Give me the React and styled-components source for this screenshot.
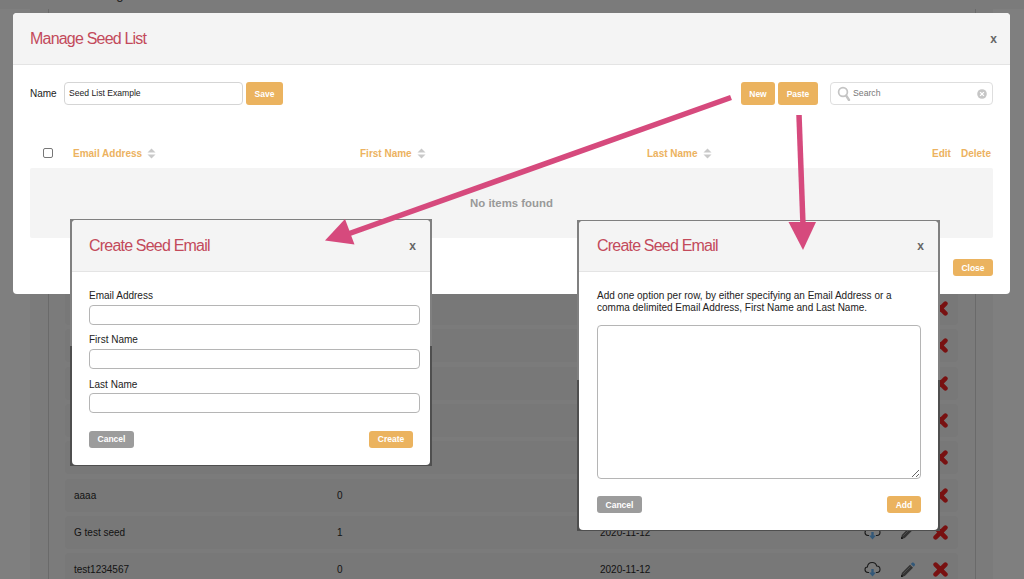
import React from "react";
import styled, { createGlobalStyle } from "styled-components";

const GlobalStyle = createGlobalStyle`
  html, body {
    margin: 0;
    padding: 0;
    height: 100%;
    overflow: hidden;
    background: #fff;
  }
  body, input, textarea, button {
    font-family: "Liberation Sans", Arial, sans-serif;
  }
`;

const rows = [
  { name: "" }, { name: "" }, { name: "" }, { name: "" }, { name: "" },
  { name: "aaaa", count: 0, date: "" },
  { name: "G test seed", count: 1, date: "2020-11-12" },
  { name: "test1234567", count: 0, date: "2020-11-12" },
];

const Page = styled.div`
  position: relative;
  width: 1024px;
  height: 579px;
  overflow: hidden;
  background: #fff;
`;

const TopBar = styled.div`
  height: 9px;
  padding-left: 52px;
  background: #f6f6f6;
  overflow: hidden;
`;

const PageTitle = styled.div`
  margin-top: -13px;
  font-size: 13px;
  line-height: 15px;
  color: #333;
`;

const Panel = styled.div`
  width: 963px;
  margin-left: 30px;
  height: 570px;
  padding: 0 17px 0 18px;
  box-sizing: border-box;
  background: #f6f6f6;
`;

const PanelInner = styled.div`
  height: 100%;
  padding: 283px 17px 0 16px;
  box-sizing: border-box;
  border-left: 1px solid #d4d4d4;
  border-right: 1px solid #d4d4d4;
`;

const ListRow = styled.div`
  display: grid;
  grid-template-columns: 263px 263px 1fr auto;
  align-items: center;
  height: 33px;
  margin-bottom: 4.33px;
  padding: 0 10px 0 9px;
  border-radius: 4px;
  background: #f0f0f0;
  font-size: 10px;
  color: #2a2a2a;
`;

const RowActions = styled.div`
  display: flex;
  align-items: center;
  gap: 18.5px;
`;

const Scrim = styled.div`
  position: absolute;
  inset: 0;
  background: rgba(0, 0, 0, 0.5);
`;

const MainModal = styled.div`
  position: absolute;
  left: 13px;
  top: 13px;
  width: 997px;
  height: 281px;
  border-radius: 4px;
  background: #fff;
  overflow: hidden;
`;

const ModalHead = styled.div`
  display: flex;
  align-items: center;
  justify-content: space-between;
  box-sizing: border-box;
  height: ${(p) => p.$height}px;
  padding: 0 ${(p) => p.$padRight}px 0 ${(p) => p.$padLeft}px;
  background: #f4f4f4;
  border-bottom: 1px solid #e4e4e4;
`;

const ModalTitle = styled.h2`
  margin: 0;
  font-size: 16px;
  font-weight: 400;
  letter-spacing: -0.8px;
  color: #c34a5b;
`;

const CloseX = styled.span`
  font-size: 12px;
  font-weight: 700;
  color: #666;
`;

const MainBody = styled.div`
  padding: 17px 17px 0;
`;

const Toolbar = styled.div`
  display: flex;
  align-items: center;
  height: 23px;
`;

const NameLabel = styled.label`
  width: 34px;
  font-size: 10px;
  color: #222;
`;

const Field = styled.input`
  box-sizing: border-box;
  width: ${(p) => p.$width};
  height: ${(p) => p.$height}px;
  padding: 0 4px 1px;
  border: 1px solid #d5d5d5;
  border-radius: 4px;
  background: #fff;
  font-size: 8.6px;
  color: #222;
  outline: none;
`;

const Button = styled.button`
  display: inline-flex;
  align-items: center;
  justify-content: center;
  box-sizing: border-box;
  width: ${(p) => p.$width}px;
  height: ${(p) => p.$height}px;
  margin-left: ${(p) => p.$gap || 0}px;
  padding: 0;
  border: none;
  border-radius: 3px;
  background: ${(p) => (p.$muted ? "#9c9c9c" : "#ebb35f")};
  color: #fff;
  font-size: 8.5px;
  font-weight: 700;
`;

const Spacer = styled.div`
  flex: 1;
`;

const SearchBox = styled.div`
  display: flex;
  align-items: center;
  box-sizing: border-box;
  width: 163px;
  height: 23px;
  margin-left: 12px;
  padding: 0 5px 0 6px;
  border: 1px solid #dedede;
  border-radius: 4px;
  font-size: 8.7px;
  color: #777;
`;

const SearchText = styled.span`
  flex: 1;
  margin-left: 2px;
  padding-bottom: 1px;
`;

const TableHead = styled.div`
  display: grid;
  grid-template-columns: 43px 287px 287px 285px 29px 1fr;
  align-items: center;
  height: 16px;
  margin-top: 40px;
  font-size: 10px;
  font-weight: 700;
  color: #ecb260;
`;

const CheckBox = styled.input`
  appearance: none;
  box-sizing: border-box;
  width: 10px;
  height: 10px;
  margin: 0 0 0 13px;
  border: 1px solid #777;
  border-radius: 2px;
  background: #fff;
`;

const SortLabel = styled.span`
  display: inline-flex;
  align-items: center;
  gap: 5px;
`;

const EmptyBand = styled.div`
  display: flex;
  align-items: center;
  justify-content: center;
  box-sizing: border-box;
  height: 70px;
  margin-top: 7px;
  padding-bottom: 1px;
  border-radius: 2px;
  background: #f4f4f4;
  font-size: 11.4px;
  font-weight: 700;
  color: #999;
`;

const MainFooter = styled.div`
  display: flex;
  justify-content: flex-end;
  margin-top: 21px;
`;

/* the pasted dialogs keep a sliver of what was behind them: mid grey up top, darker lower down */
const DialogFrame = styled.div`
  position: absolute;
  left: ${(p) => p.$left}px;
  top: ${(p) => p.$top}px;
  width: ${(p) => p.$width}px;
  padding: 1.5px 1.5px 1px 2px;
  background: linear-gradient(
    #808080 0,
    #808080 ${(p) => p.$splitAt}px,
    #4f4f4f ${(p) => p.$splitAt}px
  );
`;

const Dialog = styled.div`
  border-radius: 4px;
  background: #fff;
  overflow: hidden;
`;

const DialogBody = styled.div`
  display: flex;
  flex-direction: column;
  padding: 17px ${(p) => p.$pad}px 17.3px;
  font-size: 10px;
  color: #222;
`;

const FieldLabel = styled.label`
  margin-bottom: 2.5px;
  line-height: 13px;
`;

const DialogField = styled(Field)`
  flex: none;
  margin-bottom: 8.9px;
  border: 1px solid #b5b5b5;
`;

const Note = styled.p`
  margin: 1px 0 11px;
  line-height: 12px;
`;

const BigArea = styled.textarea`
  box-sizing: border-box;
  width: 324px;
  height: 154px;
  margin: 0 0 17px;
  border: 1px solid #b5b5b5;
  border-radius: 4px;
  outline: none;
`;

const DialogActions = styled.div`
  display: flex;
  justify-content: space-between;
  margin-top: ${(p) => p.$top || 0}px;
  margin-right: ${(p) => p.$outdent || 0}px;
`;

const ArrowLayer = styled.svg`
  position: absolute;
  inset: 0;
  pointer-events: none;
`;

const SortIcon = () => (
  <svg width="9" height="11" viewBox="0 0 9 11">
    <path d="M4.5 0.5 8.5 4.5H0.5Z M4.5 10.5 8.5 6.5H0.5Z" fill="#c9c9c9" />
  </svg>
);

const SearchIcon = () => (
  <svg width="14" height="15" viewBox="0 0 14 15" fill="none">
    <circle cx="6" cy="6" r="4.4" stroke="#c4c4c4" strokeWidth="1.7" />
    <path d="M9.2 9.6 12 14" stroke="#c4c4c4" strokeWidth="2.4" strokeLinecap="round" />
  </svg>
);

const ClearIcon = () => (
  <svg width="10" height="10" viewBox="0 0 10 10">
    <circle cx="5" cy="5" r="4.8" fill="#c6c6c6" />
    <path d="M3.1 3.1 6.9 6.9M6.9 3.1 3.1 6.9" stroke="#fff" strokeWidth="1.3" />
  </svg>
);

const CloudIcon = () => (
  <svg width="17" height="17" viewBox="0 0 17 17" fill="none">
    <path
      d="M5 11.5H4C2 11.5 1 10 1 8.6 1 7 2.2 6 3.4 6 3.7 3.4 5.8 1.5 8.2 1.5c2.2 0 4 1.5 4.5 3.5C14.6 5 16 6.5 16 8.3 16 10 14.8 11.5 13 11.5H12"
      stroke="#333"
      strokeWidth="1.1"
    />
    <path d="M7.3 8H9.7V11.5H12L8.5 15.5 5 11.5H7.3Z" fill="#66b0f0" />
  </svg>
);

const PencilIcon = () => (
  <svg width="15" height="16" viewBox="0 0 15 16">
    <path d="M1 15 1.8 11 10 2.8 13 5.8 4.8 14Z" fill="#666" />
    <path d="M10.8 2 12 .8C12.5 .3 13.2 .3 13.7 .8L14.7 1.8C15.2 2.3 15.2 3 14.7 3.5L13.6 4.8Z" fill="#66b0f0" />
    <path d="M1 15 1.5 12.7 3.3 14.5Z" fill="#111" />
    <path d="M3.2 11.8 10.5 4.5" stroke="#aaa" strokeWidth="0.8" />
  </svg>
);

const RemoveIcon = () => (
  <svg width="15" height="15" viewBox="0 0 15 15">
    <path d="M2.6 2.6 12.4 12.4M12.4 2.6 2.6 12.4" stroke="#f02222" strokeWidth="4.6" strokeLinecap="round" />
  </svg>
);

const Arrows = () => (
  <ArrowLayer width="1024" height="579" viewBox="0 0 1024 579">
    <path d="M731 97.5 348 234" stroke="#d64a7d" strokeWidth="5.5" />
    <path d="M325 240.5 345 219 354.5 244.5Z" fill="#d64a7d" />
    <path d="M799 115 803 225" stroke="#d64a7d" strokeWidth="5.5" />
    <path d="M803 250 788.5 222 816 222Z" fill="#d64a7d" />
  </ArrowLayer>
);

export default function App() {
  return (
    <Page>
      <GlobalStyle />
      <TopBar>
        <PageTitle>Seed Listing</PageTitle>
      </TopBar>
      <Panel>
        <PanelInner>
          {rows.map((row, i) => (
            <ListRow key={i}>
              <span>{row.name}</span>
              <span>{row.count}</span>
              <span>{row.date}</span>
              <RowActions>
                <CloudIcon />
                <PencilIcon />
                <RemoveIcon />
              </RowActions>
            </ListRow>
          ))}
        </PanelInner>
      </Panel>
      <Scrim />

      <MainModal>
        <ModalHead $height={52} $padLeft={17} $padRight={13}>
          <ModalTitle>Manage Seed List</ModalTitle>
          <CloseX>x</CloseX>
        </ModalHead>
        <MainBody>
          <Toolbar>
            <NameLabel>Name</NameLabel>
            <Field $width="179px" $height={23} defaultValue="Seed List Example" />
            <Button $width={37} $height={23} $gap={3}>Save</Button>
            <Spacer />
            <Button $width={34} $height={23}>New</Button>
            <Button $width={40} $height={23} $gap={3}>Paste</Button>
            <SearchBox>
              <SearchIcon />
              <SearchText>Search</SearchText>
              <ClearIcon />
            </SearchBox>
          </Toolbar>
          <TableHead>
            <CheckBox type="checkbox" />
            <SortLabel>Email Address <SortIcon /></SortLabel>
            <SortLabel>First Name <SortIcon /></SortLabel>
            <SortLabel>Last Name <SortIcon /></SortLabel>
            <span>Edit</span>
            <span>Delete</span>
          </TableHead>
          <EmptyBand>No items found</EmptyBand>
          <MainFooter>
            <Button $width={40} $height={17}>Close</Button>
          </MainFooter>
        </MainBody>
      </MainModal>

      <DialogFrame $left={70} $top={218.5} $width={358} $splitAt={127}>
        <Dialog>
          <ModalHead $height={52} $padLeft={17} $padRight={14}>
            <ModalTitle>Create Seed Email</ModalTitle>
            <CloseX>x</CloseX>
          </ModalHead>
          <DialogBody $pad={17}>
            <FieldLabel>Email Address</FieldLabel>
            <DialogField $width="331px" $height={20} />
            <FieldLabel>First Name</FieldLabel>
            <DialogField $width="331px" $height={20} />
            <FieldLabel>Last Name</FieldLabel>
            <DialogField $width="331px" $height={20} />
            <DialogActions $top={8.5}>
              <Button $width={45} $height={17} $muted>Cancel</Button>
              <Button $width={44} $height={17}>Create</Button>
            </DialogActions>
          </DialogBody>
        </Dialog>
      </DialogFrame>

      <DialogFrame $left={577} $top={219.5} $width={359} $splitAt={160}>
        <Dialog>
          <ModalHead $height={51} $padLeft={18} $padRight={14}>
            <ModalTitle>Create Seed Email</ModalTitle>
            <CloseX>x</CloseX>
          </ModalHead>
          <DialogBody $pad={18}>
            <Note>
              Add one option per row, by either specifying an Email Address or a
              comma delimited Email Address, First Name and Last Name.
            </Note>
            <BigArea />
            <DialogActions $outdent={-1}>
              <Button $width={45} $height={17} $muted>Cancel</Button>
              <Button $width={34} $height={17}>Add</Button>
            </DialogActions>
          </DialogBody>
        </Dialog>
      </DialogFrame>

      <Arrows />
    </Page>
  );
}
